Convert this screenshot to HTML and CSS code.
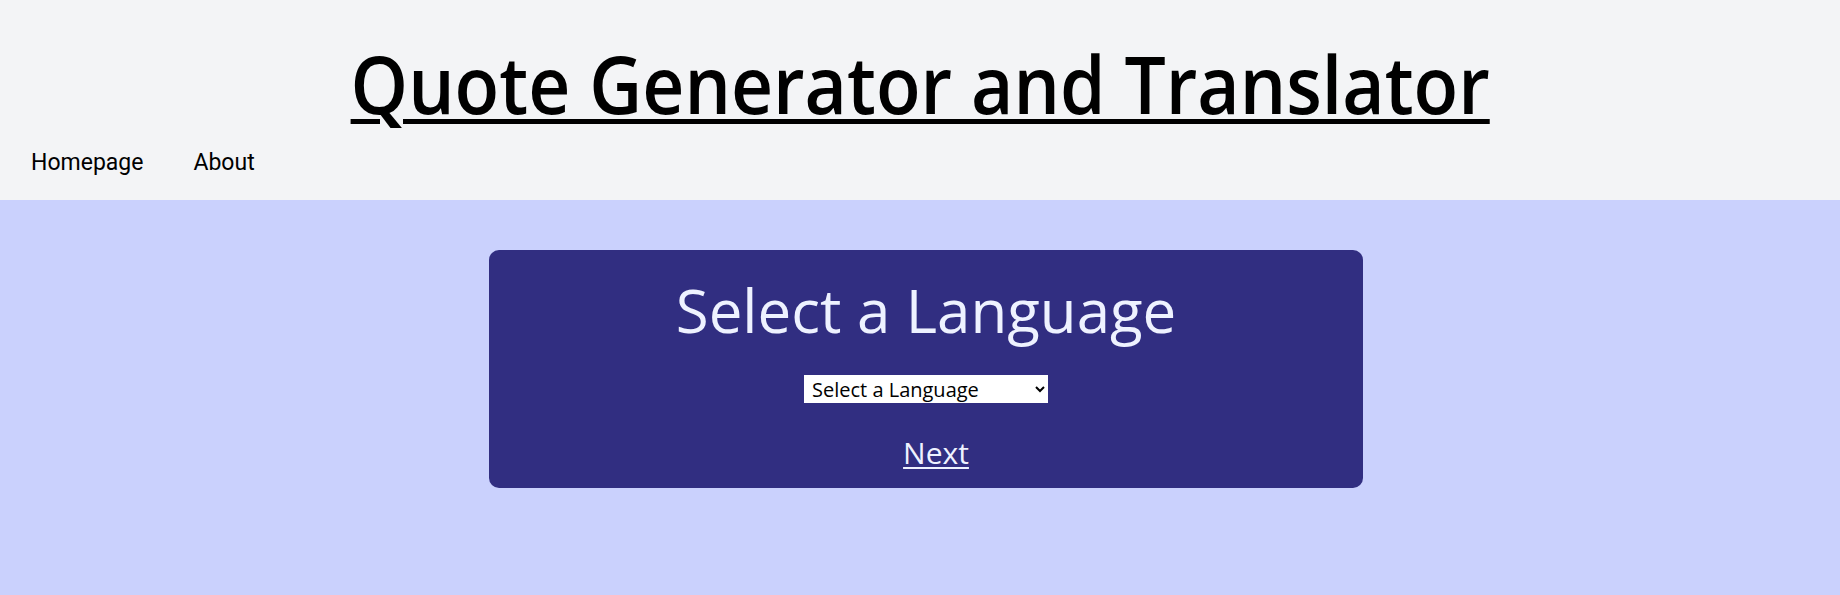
FILE: index.html
```html
<!DOCTYPE html>
<html lang="en">
<head>
<meta charset="utf-8">
<title>Quote Generator and Translator</title>
<link rel="stylesheet" href="styles.css">
</head>
<body>
<header class="site-header">
  <h1 class="site-title"><a href="#" class="title-link">Quote Generator and Translator</a></h1>
  <nav class="site-nav">
    <a href="#" class="nav-link">Homepage</a>
    <a href="#" class="nav-link">About</a>
  </nav>
</header>
<main class="main">
  <section class="card">
    <h2 class="card-title">Select a Language</h2>
    <select class="lang-select">
      <option>Select a Language</option>
      <option>Spanish</option>
      <option>French</option>
      <option>German</option>
    </select>
    <a href="#" class="next-link">Next</a>
  </section>
</main>
</body>
</html>
```
FILE: styles.css
```css
html, body {
  margin: 0;
  padding: 0;
}
body {
  font-family: "Open Sans", "Noto Sans", sans-serif;
  min-height: 595px;
  display: flex;
  flex-direction: column;
  background: #cad1fd;
}
.site-header {
  background: #f3f4f6;
  padding: 28px 0 24px;
  display: flex;
  flex-direction: column;
}
.site-title {
  margin: 0;
  text-align: center;
  font-size: 80px;
  font-weight: 600;
  line-height: 109px;
}
.title-link {
  display: inline-block;
  transform: scaleX(0.914);
  color: #000;
  text-decoration: underline;
  text-decoration-thickness: 5px;
  text-underline-offset: 5px;
}
.site-nav {
  display: flex;
  gap: 50px;
  padding-left: 31px;
  margin-top: 13px;
}
.nav-link {
  font-family: Roboto, "Open Sans", sans-serif;
  font-size: 23px;
  line-height: 26px;
  color: #000;
  text-decoration: none;
}
.main {
  flex: 1;
  display: flex;
  justify-content: center;
  align-items: flex-start;
  padding: 50px 0 0 12px;
}
.card {
  width: 874px;
  box-sizing: border-box;
  background: #312e81;
  border-radius: 10px;
  color: #eef2ff;
  display: flex;
  flex-direction: column;
  align-items: center;
  padding: 19px 0 15px;
}
.card-title {
  margin: 0;
  font-size: 60px;
  font-weight: 400;
  line-height: 82px;
}
.lang-select {
  margin-top: 24px;
  width: 244px;
  height: 28px;
  font-family: "Open Sans", sans-serif;
  font-size: 20px;
  color: #000;
  background: #fff;
  border: none;
  border-radius: 0;
  padding: 0 4px;
}
.next-link {
  margin-top: 29px;
  margin-left: 20px;
  font-size: 30px;
  line-height: 41px;
  color: #eef2ff;
  text-decoration: underline;
  text-decoration-thickness: 2px;
  text-underline-offset: 3px;
}
```
